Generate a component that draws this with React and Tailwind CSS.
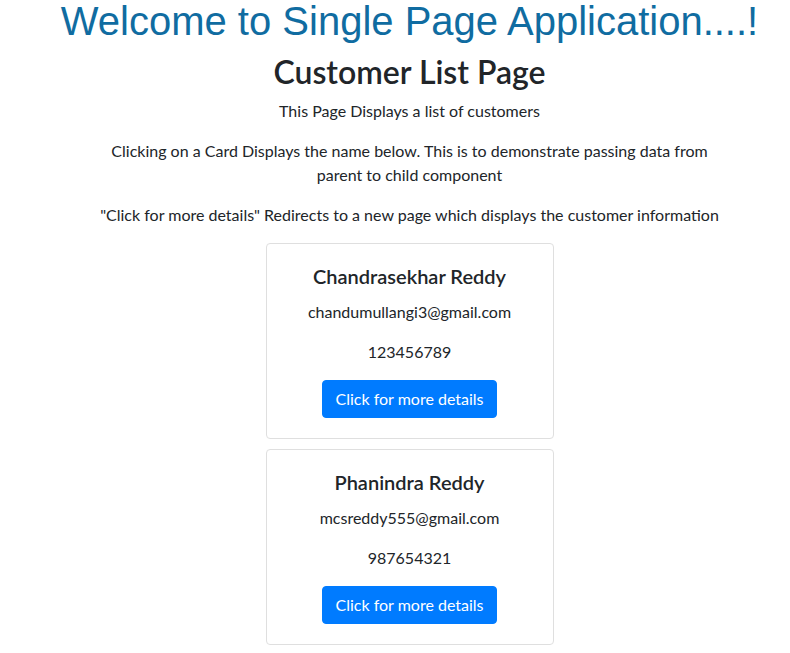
const customers = [
  { name: 'Chandrasekhar Reddy', email: 'chandumullangi3@gmail.com', phone: '123456789' },
  { name: 'Phanindra Reddy', email: 'mcsreddy555@gmail.com', phone: '987654321' },
]

function CustomerCard({ customer }) {
  return (
    <div className="w-[288px] rounded border border-[#dfdfdf] bg-white p-5 text-center">
      <h5 className="mb-3 text-[20px] leading-[24px] font-semibold">{customer.name}</h5>
      <p className="mb-4 leading-6">{customer.email}</p>
      <p className="mb-4 leading-6">{customer.phone}</p>
      <button className="rounded bg-[#007bff] px-3 py-1.5 leading-6 text-white border border-[#007bff]">
        Click for more details
      </button>
    </div>
  )
}

export default function App() {
  return (
    <div className="w-[790px] pl-[29px] bg-white text-[#212529] text-base" style={{ fontFamily: 'Lato, "Open Sans", sans-serif' }}>
      <h1 className="pt-px text-center text-[40px] leading-[40px] text-[#106ca1]" style={{ fontFamily: '"Liberation Sans", Arial, sans-serif' }}>
        Welcome to Single Page Application....!
      </h1>
      <div className="flex flex-col items-center">
        <h2 className="mt-[12px] mb-2 text-[32px] leading-[38px] font-semibold">Customer List Page</h2>
        <p className="mb-4 leading-6">This Page Displays a list of customers</p>
        <p className="mb-4 leading-6 text-center">
          Clicking on a Card Displays the name below. This is to demonstrate passing data from
          <br />
          parent to child component
        </p>
        <p className="mb-4 leading-6 whitespace-nowrap">
          "Click for more details" Redirects to a new page which displays the customer information
        </p>
        <div className="flex flex-col gap-[10px]">
          {customers.map((c) => (
            <CustomerCard key={c.email} customer={c} />
          ))}
        </div>
      </div>
    </div>
  )
}
